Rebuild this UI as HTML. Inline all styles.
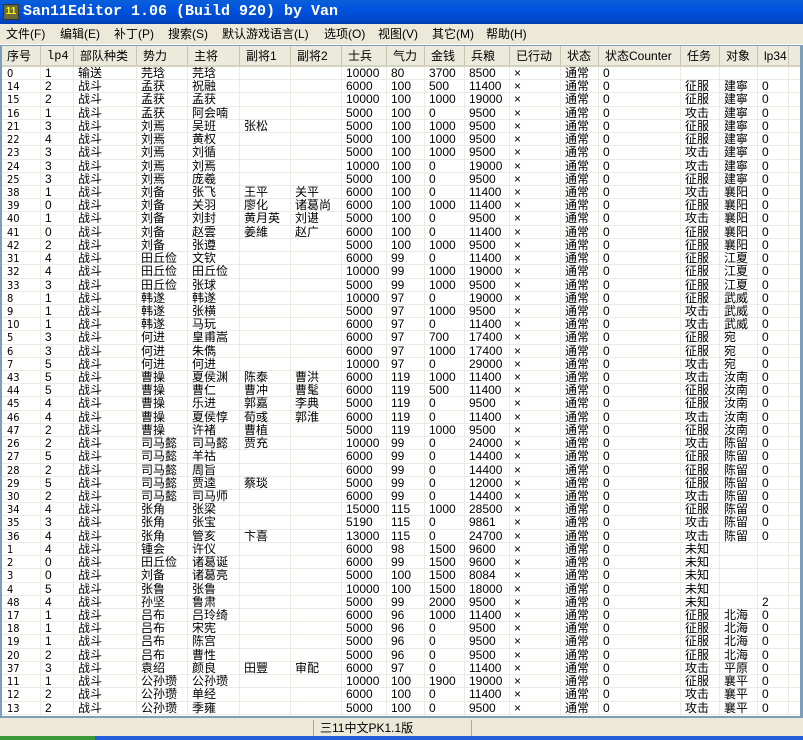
<!DOCTYPE html>
<html><head><meta charset="utf-8"><style>
*{margin:0;padding:0;box-sizing:border-box}
body{width:803px;height:740px;overflow:hidden;background:#ece9d8;font-family:"Liberation Sans","WenQuanYi Zen Hei",sans-serif;font-size:12px;position:relative}
#title{position:absolute;left:0;top:0;width:803px;height:24px;background:linear-gradient(#0a5fd8,#0053e0 40%,#0046c8 85%,#003bb0);color:#fff;font-family:"Liberation Mono","WenQuanYi Zen Hei",monospace;font-weight:bold;font-size:15px;line-height:24px;padding-left:23px}
#icon{position:absolute;left:3px;top:4px;width:16px;height:16px;background:#6a6a3a;border:1px solid #333;color:#ff0;font-size:10px;line-height:14px;text-align:center;font-family:"Liberation Sans",sans-serif}
#menu{position:absolute;left:0;top:24px;width:803px;height:21px;line-height:21px;font-size:12px;color:#000;border-bottom:1px solid #fff}
#menu span{position:absolute;top:0}
#frame{position:absolute;left:0;top:45px;width:803px;height:673px;background:#7f9db9;padding:1px 3px 2px 2px}
#grid{position:relative;width:100%;height:100%;background:#fff;overflow:hidden}
.r{display:flex;height:13.23px;line-height:13px;white-space:nowrap}
.r div{border-right:1px solid #ebeae3;border-bottom:1px solid #ebeae3;padding-left:4px;overflow:hidden;flex:none;white-space:nowrap}
.r .c1{font-family:"DejaVu Sans Condensed","DejaVu Sans",sans-serif;font-size:11px;padding-left:5px}
.h{height:21px;line-height:20px;background:#ebeadb;border-bottom:2px solid #d6d2c2}
.h div{border-right:1px solid #c7c5b2;border-bottom:none;padding-left:6px}
.h .c1{font-family:"Liberation Sans","WenQuanYi Zen Hei",sans-serif;font-size:12px}
.h .c2{font-family:"Liberation Mono",monospace}
.c1{width:39px}.c2{width:33px}.c3{width:63px}.c4{width:51px}.c5{width:52px}.c6{width:51px}.c7{width:51px}.c8{width:45px}.c9{width:38px}.c10{width:40px}.c11{width:45px}.c12{width:51px}.c13{width:38px}.c14{width:82px}.c15{width:39px}.c16{width:38px}.c17{width:31px}.c18{width:20px}
#status{position:absolute;left:0;top:718px;width:803px;height:22px;background:#ece9d8}
#sb{position:absolute;left:313px;top:2px;width:159px;height:17px;border-left:1px solid #aca899;border-right:1px solid #aca899;padding-left:6px;line-height:17px}
#task{position:absolute;left:0;top:736px;width:803px;height:4px;background:#245edb}
#task i{position:absolute;left:0;top:0;width:95px;height:4px;background:#3a9a3a}
</style></head><body>
<div id="title"><div id="icon">11</div>San11Editor 1.06 (Build 920) by Van</div>
<div id="menu"><span style="left:6px">文件(F)</span><span style="left:60px">编辑(E)</span><span style="left:114px">补丁(P)</span><span style="left:168px">搜索(S)</span><span style="left:222px">默认游戏语言(L)</span><span style="left:324px">选项(O)</span><span style="left:378px">视图(V)</span><span style="left:432px">其它(M)</span><span style="left:486px">帮助(H)</span></div>
<div id="frame"><div id="grid">
<div class="r h"><div class="c1">序号</div><div class="c2">lp4</div><div class="c3">部队种类</div><div class="c4">势力</div><div class="c5">主将</div><div class="c6">副将1</div><div class="c7">副将2</div><div class="c8">士兵</div><div class="c9">气力</div><div class="c10">金钱</div><div class="c11">兵粮</div><div class="c12">已行动</div><div class="c13">状态</div><div class="c14">状态Counter</div><div class="c15">任务</div><div class="c16">对象</div><div class="c17">lp34</div><div class="c18"></div></div>
<div class="r"><div class="c1">0</div><div class="c2">1</div><div class="c3">输送</div><div class="c4">芫琀</div><div class="c5">芫琀</div><div class="c6"></div><div class="c7"></div><div class="c8">10000</div><div class="c9">80</div><div class="c10">3700</div><div class="c11">8500</div><div class="c12">×</div><div class="c13">通常</div><div class="c14">0</div><div class="c15"></div><div class="c16"></div><div class="c17"></div><div class="c18"></div></div>
<div class="r"><div class="c1">14</div><div class="c2">2</div><div class="c3">战斗</div><div class="c4">孟获</div><div class="c5">祝融</div><div class="c6"></div><div class="c7"></div><div class="c8">6000</div><div class="c9">100</div><div class="c10">500</div><div class="c11">11400</div><div class="c12">×</div><div class="c13">通常</div><div class="c14">0</div><div class="c15">征服</div><div class="c16">建寧</div><div class="c17">0</div><div class="c18"></div></div>
<div class="r"><div class="c1">15</div><div class="c2">2</div><div class="c3">战斗</div><div class="c4">孟获</div><div class="c5">孟获</div><div class="c6"></div><div class="c7"></div><div class="c8">10000</div><div class="c9">100</div><div class="c10">1000</div><div class="c11">19000</div><div class="c12">×</div><div class="c13">通常</div><div class="c14">0</div><div class="c15">征服</div><div class="c16">建寧</div><div class="c17">0</div><div class="c18"></div></div>
<div class="r"><div class="c1">16</div><div class="c2">1</div><div class="c3">战斗</div><div class="c4">孟获</div><div class="c5">阿会喃</div><div class="c6"></div><div class="c7"></div><div class="c8">5000</div><div class="c9">100</div><div class="c10">0</div><div class="c11">9500</div><div class="c12">×</div><div class="c13">通常</div><div class="c14">0</div><div class="c15">攻击</div><div class="c16">建寧</div><div class="c17">0</div><div class="c18"></div></div>
<div class="r"><div class="c1">21</div><div class="c2">3</div><div class="c3">战斗</div><div class="c4">刘焉</div><div class="c5">吴班</div><div class="c6">张松</div><div class="c7"></div><div class="c8">5000</div><div class="c9">100</div><div class="c10">1000</div><div class="c11">9500</div><div class="c12">×</div><div class="c13">通常</div><div class="c14">0</div><div class="c15">征服</div><div class="c16">建寧</div><div class="c17">0</div><div class="c18"></div></div>
<div class="r"><div class="c1">22</div><div class="c2">4</div><div class="c3">战斗</div><div class="c4">刘焉</div><div class="c5">黄权</div><div class="c6"></div><div class="c7"></div><div class="c8">5000</div><div class="c9">100</div><div class="c10">1000</div><div class="c11">9500</div><div class="c12">×</div><div class="c13">通常</div><div class="c14">0</div><div class="c15">征服</div><div class="c16">建寧</div><div class="c17">0</div><div class="c18"></div></div>
<div class="r"><div class="c1">23</div><div class="c2">3</div><div class="c3">战斗</div><div class="c4">刘焉</div><div class="c5">刘循</div><div class="c6"></div><div class="c7"></div><div class="c8">5000</div><div class="c9">100</div><div class="c10">1000</div><div class="c11">9500</div><div class="c12">×</div><div class="c13">通常</div><div class="c14">0</div><div class="c15">攻击</div><div class="c16">建寧</div><div class="c17">0</div><div class="c18"></div></div>
<div class="r"><div class="c1">24</div><div class="c2">3</div><div class="c3">战斗</div><div class="c4">刘焉</div><div class="c5">刘焉</div><div class="c6"></div><div class="c7"></div><div class="c8">10000</div><div class="c9">100</div><div class="c10">0</div><div class="c11">19000</div><div class="c12">×</div><div class="c13">通常</div><div class="c14">0</div><div class="c15">攻击</div><div class="c16">建寧</div><div class="c17">0</div><div class="c18"></div></div>
<div class="r"><div class="c1">25</div><div class="c2">3</div><div class="c3">战斗</div><div class="c4">刘焉</div><div class="c5">庞羲</div><div class="c6"></div><div class="c7"></div><div class="c8">5000</div><div class="c9">100</div><div class="c10">0</div><div class="c11">9500</div><div class="c12">×</div><div class="c13">通常</div><div class="c14">0</div><div class="c15">征服</div><div class="c16">建寧</div><div class="c17">0</div><div class="c18"></div></div>
<div class="r"><div class="c1">38</div><div class="c2">1</div><div class="c3">战斗</div><div class="c4">刘备</div><div class="c5">张飞</div><div class="c6">王平</div><div class="c7">关平</div><div class="c8">6000</div><div class="c9">100</div><div class="c10">0</div><div class="c11">11400</div><div class="c12">×</div><div class="c13">通常</div><div class="c14">0</div><div class="c15">攻击</div><div class="c16">襄阳</div><div class="c17">0</div><div class="c18"></div></div>
<div class="r"><div class="c1">39</div><div class="c2">0</div><div class="c3">战斗</div><div class="c4">刘备</div><div class="c5">关羽</div><div class="c6">廖化</div><div class="c7">诸葛尚</div><div class="c8">6000</div><div class="c9">100</div><div class="c10">1000</div><div class="c11">11400</div><div class="c12">×</div><div class="c13">通常</div><div class="c14">0</div><div class="c15">征服</div><div class="c16">襄阳</div><div class="c17">0</div><div class="c18"></div></div>
<div class="r"><div class="c1">40</div><div class="c2">1</div><div class="c3">战斗</div><div class="c4">刘备</div><div class="c5">刘封</div><div class="c6">黄月英</div><div class="c7">刘谌</div><div class="c8">5000</div><div class="c9">100</div><div class="c10">0</div><div class="c11">9500</div><div class="c12">×</div><div class="c13">通常</div><div class="c14">0</div><div class="c15">攻击</div><div class="c16">襄阳</div><div class="c17">0</div><div class="c18"></div></div>
<div class="r"><div class="c1">41</div><div class="c2">0</div><div class="c3">战斗</div><div class="c4">刘备</div><div class="c5">赵雲</div><div class="c6">姜維</div><div class="c7">赵广</div><div class="c8">6000</div><div class="c9">100</div><div class="c10">0</div><div class="c11">11400</div><div class="c12">×</div><div class="c13">通常</div><div class="c14">0</div><div class="c15">征服</div><div class="c16">襄阳</div><div class="c17">0</div><div class="c18"></div></div>
<div class="r"><div class="c1">42</div><div class="c2">2</div><div class="c3">战斗</div><div class="c4">刘备</div><div class="c5">张遵</div><div class="c6"></div><div class="c7"></div><div class="c8">5000</div><div class="c9">100</div><div class="c10">1000</div><div class="c11">9500</div><div class="c12">×</div><div class="c13">通常</div><div class="c14">0</div><div class="c15">征服</div><div class="c16">襄阳</div><div class="c17">0</div><div class="c18"></div></div>
<div class="r"><div class="c1">31</div><div class="c2">4</div><div class="c3">战斗</div><div class="c4">田丘俭</div><div class="c5">文钦</div><div class="c6"></div><div class="c7"></div><div class="c8">6000</div><div class="c9">99</div><div class="c10">0</div><div class="c11">11400</div><div class="c12">×</div><div class="c13">通常</div><div class="c14">0</div><div class="c15">征服</div><div class="c16">江夏</div><div class="c17">0</div><div class="c18"></div></div>
<div class="r"><div class="c1">32</div><div class="c2">4</div><div class="c3">战斗</div><div class="c4">田丘俭</div><div class="c5">田丘俭</div><div class="c6"></div><div class="c7"></div><div class="c8">10000</div><div class="c9">99</div><div class="c10">1000</div><div class="c11">19000</div><div class="c12">×</div><div class="c13">通常</div><div class="c14">0</div><div class="c15">征服</div><div class="c16">江夏</div><div class="c17">0</div><div class="c18"></div></div>
<div class="r"><div class="c1">33</div><div class="c2">3</div><div class="c3">战斗</div><div class="c4">田丘俭</div><div class="c5">张球</div><div class="c6"></div><div class="c7"></div><div class="c8">5000</div><div class="c9">99</div><div class="c10">1000</div><div class="c11">9500</div><div class="c12">×</div><div class="c13">通常</div><div class="c14">0</div><div class="c15">征服</div><div class="c16">江夏</div><div class="c17">0</div><div class="c18"></div></div>
<div class="r"><div class="c1">8</div><div class="c2">1</div><div class="c3">战斗</div><div class="c4">韩遂</div><div class="c5">韩遂</div><div class="c6"></div><div class="c7"></div><div class="c8">10000</div><div class="c9">97</div><div class="c10">0</div><div class="c11">19000</div><div class="c12">×</div><div class="c13">通常</div><div class="c14">0</div><div class="c15">征服</div><div class="c16">武威</div><div class="c17">0</div><div class="c18"></div></div>
<div class="r"><div class="c1">9</div><div class="c2">1</div><div class="c3">战斗</div><div class="c4">韩遂</div><div class="c5">张横</div><div class="c6"></div><div class="c7"></div><div class="c8">5000</div><div class="c9">97</div><div class="c10">1000</div><div class="c11">9500</div><div class="c12">×</div><div class="c13">通常</div><div class="c14">0</div><div class="c15">攻击</div><div class="c16">武威</div><div class="c17">0</div><div class="c18"></div></div>
<div class="r"><div class="c1">10</div><div class="c2">1</div><div class="c3">战斗</div><div class="c4">韩遂</div><div class="c5">马玩</div><div class="c6"></div><div class="c7"></div><div class="c8">6000</div><div class="c9">97</div><div class="c10">0</div><div class="c11">11400</div><div class="c12">×</div><div class="c13">通常</div><div class="c14">0</div><div class="c15">攻击</div><div class="c16">武威</div><div class="c17">0</div><div class="c18"></div></div>
<div class="r"><div class="c1">5</div><div class="c2">3</div><div class="c3">战斗</div><div class="c4">何进</div><div class="c5">皇甫嵩</div><div class="c6"></div><div class="c7"></div><div class="c8">6000</div><div class="c9">97</div><div class="c10">700</div><div class="c11">17400</div><div class="c12">×</div><div class="c13">通常</div><div class="c14">0</div><div class="c15">征服</div><div class="c16">宛</div><div class="c17">0</div><div class="c18"></div></div>
<div class="r"><div class="c1">6</div><div class="c2">3</div><div class="c3">战斗</div><div class="c4">何进</div><div class="c5">朱儁</div><div class="c6"></div><div class="c7"></div><div class="c8">6000</div><div class="c9">97</div><div class="c10">1000</div><div class="c11">17400</div><div class="c12">×</div><div class="c13">通常</div><div class="c14">0</div><div class="c15">征服</div><div class="c16">宛</div><div class="c17">0</div><div class="c18"></div></div>
<div class="r"><div class="c1">7</div><div class="c2">5</div><div class="c3">战斗</div><div class="c4">何进</div><div class="c5">何进</div><div class="c6"></div><div class="c7"></div><div class="c8">10000</div><div class="c9">97</div><div class="c10">0</div><div class="c11">29000</div><div class="c12">×</div><div class="c13">通常</div><div class="c14">0</div><div class="c15">攻击</div><div class="c16">宛</div><div class="c17">0</div><div class="c18"></div></div>
<div class="r"><div class="c1">43</div><div class="c2">5</div><div class="c3">战斗</div><div class="c4">曹操</div><div class="c5">夏侯渊</div><div class="c6">陈泰</div><div class="c7">曹洪</div><div class="c8">6000</div><div class="c9">119</div><div class="c10">1000</div><div class="c11">11400</div><div class="c12">×</div><div class="c13">通常</div><div class="c14">0</div><div class="c15">攻击</div><div class="c16">汝南</div><div class="c17">0</div><div class="c18"></div></div>
<div class="r"><div class="c1">44</div><div class="c2">5</div><div class="c3">战斗</div><div class="c4">曹操</div><div class="c5">曹仁</div><div class="c6">曹冲</div><div class="c7">曹髦</div><div class="c8">6000</div><div class="c9">119</div><div class="c10">500</div><div class="c11">11400</div><div class="c12">×</div><div class="c13">通常</div><div class="c14">0</div><div class="c15">征服</div><div class="c16">汝南</div><div class="c17">0</div><div class="c18"></div></div>
<div class="r"><div class="c1">45</div><div class="c2">4</div><div class="c3">战斗</div><div class="c4">曹操</div><div class="c5">乐进</div><div class="c6">郭嘉</div><div class="c7">李典</div><div class="c8">5000</div><div class="c9">119</div><div class="c10">0</div><div class="c11">9500</div><div class="c12">×</div><div class="c13">通常</div><div class="c14">0</div><div class="c15">征服</div><div class="c16">汝南</div><div class="c17">0</div><div class="c18"></div></div>
<div class="r"><div class="c1">46</div><div class="c2">4</div><div class="c3">战斗</div><div class="c4">曹操</div><div class="c5">夏侯惇</div><div class="c6">荀彧</div><div class="c7">郭淮</div><div class="c8">6000</div><div class="c9">119</div><div class="c10">0</div><div class="c11">11400</div><div class="c12">×</div><div class="c13">通常</div><div class="c14">0</div><div class="c15">攻击</div><div class="c16">汝南</div><div class="c17">0</div><div class="c18"></div></div>
<div class="r"><div class="c1">47</div><div class="c2">2</div><div class="c3">战斗</div><div class="c4">曹操</div><div class="c5">许褚</div><div class="c6">曹植</div><div class="c7"></div><div class="c8">5000</div><div class="c9">119</div><div class="c10">1000</div><div class="c11">9500</div><div class="c12">×</div><div class="c13">通常</div><div class="c14">0</div><div class="c15">征服</div><div class="c16">汝南</div><div class="c17">0</div><div class="c18"></div></div>
<div class="r"><div class="c1">26</div><div class="c2">2</div><div class="c3">战斗</div><div class="c4">司马懿</div><div class="c5">司马懿</div><div class="c6">贾充</div><div class="c7"></div><div class="c8">10000</div><div class="c9">99</div><div class="c10">0</div><div class="c11">24000</div><div class="c12">×</div><div class="c13">通常</div><div class="c14">0</div><div class="c15">攻击</div><div class="c16">陈留</div><div class="c17">0</div><div class="c18"></div></div>
<div class="r"><div class="c1">27</div><div class="c2">5</div><div class="c3">战斗</div><div class="c4">司马懿</div><div class="c5">羊祜</div><div class="c6"></div><div class="c7"></div><div class="c8">6000</div><div class="c9">99</div><div class="c10">0</div><div class="c11">14400</div><div class="c12">×</div><div class="c13">通常</div><div class="c14">0</div><div class="c15">征服</div><div class="c16">陈留</div><div class="c17">0</div><div class="c18"></div></div>
<div class="r"><div class="c1">28</div><div class="c2">2</div><div class="c3">战斗</div><div class="c4">司马懿</div><div class="c5">周旨</div><div class="c6"></div><div class="c7"></div><div class="c8">6000</div><div class="c9">99</div><div class="c10">0</div><div class="c11">14400</div><div class="c12">×</div><div class="c13">通常</div><div class="c14">0</div><div class="c15">征服</div><div class="c16">陈留</div><div class="c17">0</div><div class="c18"></div></div>
<div class="r"><div class="c1">29</div><div class="c2">5</div><div class="c3">战斗</div><div class="c4">司马懿</div><div class="c5">贾逵</div><div class="c6">蔡琰</div><div class="c7"></div><div class="c8">5000</div><div class="c9">99</div><div class="c10">0</div><div class="c11">12000</div><div class="c12">×</div><div class="c13">通常</div><div class="c14">0</div><div class="c15">征服</div><div class="c16">陈留</div><div class="c17">0</div><div class="c18"></div></div>
<div class="r"><div class="c1">30</div><div class="c2">2</div><div class="c3">战斗</div><div class="c4">司马懿</div><div class="c5">司马师</div><div class="c6"></div><div class="c7"></div><div class="c8">6000</div><div class="c9">99</div><div class="c10">0</div><div class="c11">14400</div><div class="c12">×</div><div class="c13">通常</div><div class="c14">0</div><div class="c15">攻击</div><div class="c16">陈留</div><div class="c17">0</div><div class="c18"></div></div>
<div class="r"><div class="c1">34</div><div class="c2">4</div><div class="c3">战斗</div><div class="c4">张角</div><div class="c5">张梁</div><div class="c6"></div><div class="c7"></div><div class="c8">15000</div><div class="c9">115</div><div class="c10">1000</div><div class="c11">28500</div><div class="c12">×</div><div class="c13">通常</div><div class="c14">0</div><div class="c15">征服</div><div class="c16">陈留</div><div class="c17">0</div><div class="c18"></div></div>
<div class="r"><div class="c1">35</div><div class="c2">3</div><div class="c3">战斗</div><div class="c4">张角</div><div class="c5">张宝</div><div class="c6"></div><div class="c7"></div><div class="c8">5190</div><div class="c9">115</div><div class="c10">0</div><div class="c11">9861</div><div class="c12">×</div><div class="c13">通常</div><div class="c14">0</div><div class="c15">攻击</div><div class="c16">陈留</div><div class="c17">0</div><div class="c18"></div></div>
<div class="r"><div class="c1">36</div><div class="c2">4</div><div class="c3">战斗</div><div class="c4">张角</div><div class="c5">管亥</div><div class="c6">卞喜</div><div class="c7"></div><div class="c8">13000</div><div class="c9">115</div><div class="c10">0</div><div class="c11">24700</div><div class="c12">×</div><div class="c13">通常</div><div class="c14">0</div><div class="c15">攻击</div><div class="c16">陈留</div><div class="c17">0</div><div class="c18"></div></div>
<div class="r"><div class="c1">1</div><div class="c2">4</div><div class="c3">战斗</div><div class="c4">锺会</div><div class="c5">许仪</div><div class="c6"></div><div class="c7"></div><div class="c8">6000</div><div class="c9">98</div><div class="c10">1500</div><div class="c11">9600</div><div class="c12">×</div><div class="c13">通常</div><div class="c14">0</div><div class="c15">未知</div><div class="c16"></div><div class="c17"></div><div class="c18"></div></div>
<div class="r"><div class="c1">2</div><div class="c2">0</div><div class="c3">战斗</div><div class="c4">田丘俭</div><div class="c5">诸葛诞</div><div class="c6"></div><div class="c7"></div><div class="c8">6000</div><div class="c9">99</div><div class="c10">1500</div><div class="c11">9600</div><div class="c12">×</div><div class="c13">通常</div><div class="c14">0</div><div class="c15">未知</div><div class="c16"></div><div class="c17"></div><div class="c18"></div></div>
<div class="r"><div class="c1">3</div><div class="c2">0</div><div class="c3">战斗</div><div class="c4">刘备</div><div class="c5">诸葛亮</div><div class="c6"></div><div class="c7"></div><div class="c8">5000</div><div class="c9">100</div><div class="c10">1500</div><div class="c11">8084</div><div class="c12">×</div><div class="c13">通常</div><div class="c14">0</div><div class="c15">未知</div><div class="c16"></div><div class="c17"></div><div class="c18"></div></div>
<div class="r"><div class="c1">4</div><div class="c2">5</div><div class="c3">战斗</div><div class="c4">张鲁</div><div class="c5">张鲁</div><div class="c6"></div><div class="c7"></div><div class="c8">10000</div><div class="c9">100</div><div class="c10">1500</div><div class="c11">18000</div><div class="c12">×</div><div class="c13">通常</div><div class="c14">0</div><div class="c15">未知</div><div class="c16"></div><div class="c17"></div><div class="c18"></div></div>
<div class="r"><div class="c1">48</div><div class="c2">4</div><div class="c3">战斗</div><div class="c4">孙坚</div><div class="c5">鲁肃</div><div class="c6"></div><div class="c7"></div><div class="c8">5000</div><div class="c9">99</div><div class="c10">2000</div><div class="c11">9500</div><div class="c12">×</div><div class="c13">通常</div><div class="c14">0</div><div class="c15">未知</div><div class="c16"></div><div class="c17">2</div><div class="c18"></div></div>
<div class="r"><div class="c1">17</div><div class="c2">1</div><div class="c3">战斗</div><div class="c4">吕布</div><div class="c5">吕玲绮</div><div class="c6"></div><div class="c7"></div><div class="c8">6000</div><div class="c9">96</div><div class="c10">1000</div><div class="c11">11400</div><div class="c12">×</div><div class="c13">通常</div><div class="c14">0</div><div class="c15">征服</div><div class="c16">北海</div><div class="c17">0</div><div class="c18"></div></div>
<div class="r"><div class="c1">18</div><div class="c2">1</div><div class="c3">战斗</div><div class="c4">吕布</div><div class="c5">宋宪</div><div class="c6"></div><div class="c7"></div><div class="c8">5000</div><div class="c9">96</div><div class="c10">0</div><div class="c11">9500</div><div class="c12">×</div><div class="c13">通常</div><div class="c14">0</div><div class="c15">征服</div><div class="c16">北海</div><div class="c17">0</div><div class="c18"></div></div>
<div class="r"><div class="c1">19</div><div class="c2">1</div><div class="c3">战斗</div><div class="c4">吕布</div><div class="c5">陈宫</div><div class="c6"></div><div class="c7"></div><div class="c8">5000</div><div class="c9">96</div><div class="c10">0</div><div class="c11">9500</div><div class="c12">×</div><div class="c13">通常</div><div class="c14">0</div><div class="c15">征服</div><div class="c16">北海</div><div class="c17">0</div><div class="c18"></div></div>
<div class="r"><div class="c1">20</div><div class="c2">2</div><div class="c3">战斗</div><div class="c4">吕布</div><div class="c5">曹性</div><div class="c6"></div><div class="c7"></div><div class="c8">5000</div><div class="c9">96</div><div class="c10">0</div><div class="c11">9500</div><div class="c12">×</div><div class="c13">通常</div><div class="c14">0</div><div class="c15">征服</div><div class="c16">北海</div><div class="c17">0</div><div class="c18"></div></div>
<div class="r"><div class="c1">37</div><div class="c2">3</div><div class="c3">战斗</div><div class="c4">袁绍</div><div class="c5">颜良</div><div class="c6">田豐</div><div class="c7">审配</div><div class="c8">6000</div><div class="c9">97</div><div class="c10">0</div><div class="c11">11400</div><div class="c12">×</div><div class="c13">通常</div><div class="c14">0</div><div class="c15">攻击</div><div class="c16">平原</div><div class="c17">0</div><div class="c18"></div></div>
<div class="r"><div class="c1">11</div><div class="c2">1</div><div class="c3">战斗</div><div class="c4">公孙瓒</div><div class="c5">公孙瓒</div><div class="c6"></div><div class="c7"></div><div class="c8">10000</div><div class="c9">100</div><div class="c10">1900</div><div class="c11">19000</div><div class="c12">×</div><div class="c13">通常</div><div class="c14">0</div><div class="c15">征服</div><div class="c16">襄平</div><div class="c17">0</div><div class="c18"></div></div>
<div class="r"><div class="c1">12</div><div class="c2">2</div><div class="c3">战斗</div><div class="c4">公孙瓒</div><div class="c5">单经</div><div class="c6"></div><div class="c7"></div><div class="c8">6000</div><div class="c9">100</div><div class="c10">0</div><div class="c11">11400</div><div class="c12">×</div><div class="c13">通常</div><div class="c14">0</div><div class="c15">攻击</div><div class="c16">襄平</div><div class="c17">0</div><div class="c18"></div></div>
<div class="r"><div class="c1">13</div><div class="c2">2</div><div class="c3">战斗</div><div class="c4">公孙瓒</div><div class="c5">季雍</div><div class="c6"></div><div class="c7"></div><div class="c8">5000</div><div class="c9">100</div><div class="c10">0</div><div class="c11">9500</div><div class="c12">×</div><div class="c13">通常</div><div class="c14">0</div><div class="c15">攻击</div><div class="c16">襄平</div><div class="c17">0</div><div class="c18"></div></div>
<div class="r" style="height:15px"><div class="c1"></div><div class="c2"></div><div class="c3"></div><div class="c4"></div><div class="c5"></div><div class="c6"></div><div class="c7"></div><div class="c8"></div><div class="c9"></div><div class="c10"></div><div class="c11"></div><div class="c12"></div><div class="c13"></div><div class="c14"></div><div class="c15"></div><div class="c16"></div><div class="c17"></div><div class="c18"></div></div>
</div></div>
<div id="status"><div id="sb">三11中文PK1.1版</div></div>
<div id="task"><i></i></div>
</body></html>
